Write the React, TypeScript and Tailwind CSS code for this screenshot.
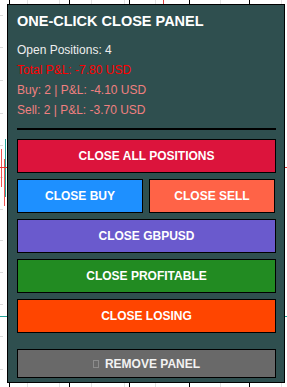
import React from "react";

const font = { fontFamily: '"Liberation Sans", Arial, sans-serif' };

function Btn({ label, cls, w }: { label: React.ReactNode; cls: string; w?: string }) {
  return (
    <div
      className={`flex h-[34px] items-center justify-center border border-black text-[12px] font-bold text-white ${cls} ${w ?? "w-full"}`}
    >
      {label}
    </div>
  );
}

export default function App() {
  const topDark = [9, 69, 129, 189, 249];
  const topLight = [27, 59, 91, 124, 155, 220, 281];
  const leftDash = [15, 47, 80, 113, 145, 177, 209, 240, 272, 304, 336, 369];
  return (
    <div className="relative h-[387px] w-[287px] overflow-hidden bg-white" style={font}>
      {/* chart canvas decorations */}
      {topDark.map((x) => (
        <div key={"t" + x} className="absolute top-0 h-[4px] w-px bg-black" style={{ left: x }} />
      ))}
      {topDark.map((x) => (
        <div key={"b" + x} className="absolute top-[383px] h-[4px] w-px bg-black" style={{ left: x }} />
      ))}
      {topLight.map((x) => (
        <div key={"l" + x} className="absolute top-0 h-[4px] w-px bg-[#e2e2e2]" style={{ left: x }} />
      ))}
      {topLight.map((x) => (
        <div key={"lb" + x} className="absolute top-[383px] h-[4px] w-px bg-[#e2e2e2]" style={{ left: x }} />
      ))}
      <div className="absolute left-[163px] top-0 h-[4px] w-px bg-[#e04040]" />
      {leftDash.map((y) => (
        <div key={"d" + y} className="absolute left-0 h-px w-[3px] bg-[#dcdcdc]" style={{ top: y }} />
      ))}
      <div className="absolute left-[5px] top-[139px] h-[58px] w-px bg-[#26a69a]" />
      <div className="absolute left-[1px] top-[149px] h-[38px] w-px bg-[#ef5350]" />
      <div className="absolute left-[4px] top-[159px] h-[47px] w-px bg-[#ef5350]" />
      <div className="absolute left-0 top-[167px] h-px w-[287px] bg-[#e53935]" />
      <div className="absolute left-0 top-[316px] h-px w-[287px] bg-[#26a69a]" />

      {/* panel */}
      <div className="relative ml-[7px] mt-[4px] flex h-[379px] w-[278px] flex-col border border-black bg-[#2F4F4F] pl-[9px] pr-[8px] pt-[8px]">
        <div className="text-[14.5px] font-bold leading-[17px] text-white">ONE-CLICK CLOSE PANEL</div>
        <div className="mt-[10px] flex flex-col text-[12px] leading-[20px]">
          <div className="text-[#eeeeee]">Open Positions: 4</div>
          <div className="text-[#ff0000]">Total P&amp;L: -7.80 USD</div>
          <div className="text-[#F08080]">Buy: 2 | P&amp;L: -4.10 USD</div>
          <div className="text-[#F08080]">Sell: 2 | P&amp;L: -3.70 USD</div>
        </div>
        <div className="mt-[8px] h-[2px] w-[259px] bg-black" />
        <div className="mt-[9px] flex w-[259px] flex-col gap-[6px]">
          <Btn label="CLOSE ALL POSITIONS" cls="bg-[#DC143C]" />
          <div className="flex gap-[6px]">
            <Btn label="CLOSE BUY" cls="bg-[#1E90FF]" w="w-[126px]" />
            <Btn label="CLOSE SELL" cls="bg-[#FF6347]" w="w-[126px]" />
          </div>
          <Btn label="CLOSE GBPUSD" cls="bg-[#6A5ACD]" />
          <Btn label="CLOSE PROFITABLE" cls="bg-[#228B22]" />
          <Btn label="CLOSE LOSING" cls="bg-[#FF4500]" />
        </div>
        <div className="mt-[16px] flex h-[29px] w-[259px] items-center justify-center gap-[6px] border border-black bg-[#696969] text-[12px] font-bold text-[#f2f2f2]">
          <span className="inline-block h-[8px] w-[6px] border border-[#8c8c8c]" />
          <span>REMOVE PANEL</span>
        </div>
      </div>
    </div>
  );
}
